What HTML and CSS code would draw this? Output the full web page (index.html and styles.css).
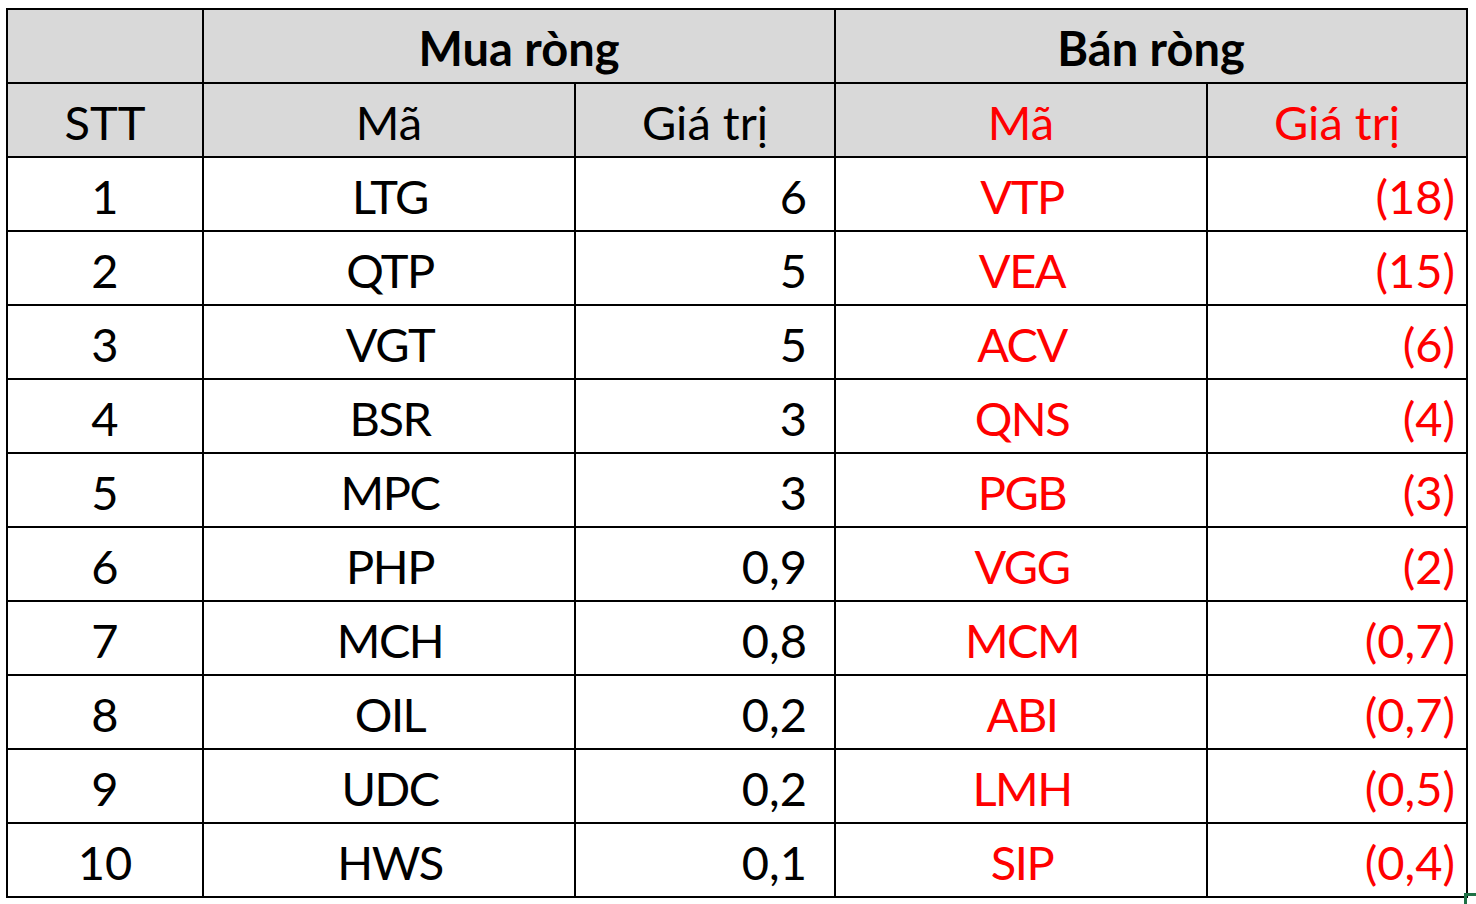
FILE: index.html
```html
<!DOCTYPE html>
<html lang="vi">
<head>
<meta charset="utf-8">
<title>Mua ròng / Bán ròng</title>
<link rel="stylesheet" href="styles.css">
</head>
<body>
<div class="sheet">
  <div class="grid">
    <div class="cell head"></div>
    <div class="cell head bold span2">Mua ròng</div>
    <div class="cell head bold span2">Bán ròng</div>

    <div class="cell head">STT</div>
    <div class="cell head">Mã</div>
    <div class="cell head">Giá trị</div>
    <div class="cell head red">Mã</div>
    <div class="cell head red">Giá trị</div>

    <div class="cell">1</div><div class="cell code">LTG</div><div class="cell num">6</div><div class="cell code red">VTP</div><div class="cell num neg">(18)</div>
    <div class="cell">2</div><div class="cell code">QTP</div><div class="cell num">5</div><div class="cell code red">VEA</div><div class="cell num neg">(15)</div>
    <div class="cell">3</div><div class="cell code">VGT</div><div class="cell num">5</div><div class="cell code red">ACV</div><div class="cell num neg">(6)</div>
    <div class="cell">4</div><div class="cell code">BSR</div><div class="cell num">3</div><div class="cell code red">QNS</div><div class="cell num neg">(4)</div>
    <div class="cell">5</div><div class="cell code">MPC</div><div class="cell num">3</div><div class="cell code red">PGB</div><div class="cell num neg">(3)</div>
    <div class="cell">6</div><div class="cell code">PHP</div><div class="cell num">0,9</div><div class="cell code red">VGG</div><div class="cell num neg">(2)</div>
    <div class="cell">7</div><div class="cell code">MCH</div><div class="cell num">0,8</div><div class="cell code red">MCM</div><div class="cell num neg">(0,7)</div>
    <div class="cell">8</div><div class="cell code">OIL</div><div class="cell num">0,2</div><div class="cell code red">ABI</div><div class="cell num neg">(0,7)</div>
    <div class="cell">9</div><div class="cell code">UDC</div><div class="cell num">0,2</div><div class="cell code red">LMH</div><div class="cell num neg">(0,5)</div>
    <div class="cell">10</div><div class="cell code">HWS</div><div class="cell num">0,1</div><div class="cell code red">SIP</div><div class="cell num neg">(0,4)</div>
  </div>
  <div class="handle"></div>
</div>
</body>
</html>
```

FILE: styles.css
```css
html, body {
  margin: 0;
  padding: 0;
  background: #ffffff;
}

body {
  width: 1476px;
  height: 904px;
  overflow: hidden;
  font-family: "Lato", "Open Sans", sans-serif;
}

.sheet {
  position: relative;
  padding: 8px 0 0 6px;
}

.grid {
  display: grid;
  grid-template-columns: 194px 370px 258px 370px 258px;
  grid-auto-rows: 72px;
  gap: 2px;
  padding: 2px;
  background: #000000;
  width: max-content;
}

.cell {
  background: #ffffff;
  color: #000000;
  font-size: 47px;
  display: flex;
  align-items: center;
  justify-content: center;
  padding-top: 3px;
  box-sizing: border-box;
  white-space: nowrap;
}

.head {
  background: #d9d9d9;
}

.bold {
  font-weight: 700;
}

.span2 {
  grid-column: span 2;
}

.red {
  color: #ff0000;
}

.code {
  letter-spacing: -1.5px;
  padding-left: 2px;
}

.num {
  justify-content: flex-end;
  padding-right: 27px;
}

.num.neg {
  color: #ff0000;
  padding-right: 11px;
}

.handle {
  position: absolute;
  left: 1464px;
  top: 893px;
  width: 12px;
  height: 11px;
  box-sizing: border-box;
  border-left: 3px solid #1e7145;
  border-top: 3px solid #1e7145;
}
```
